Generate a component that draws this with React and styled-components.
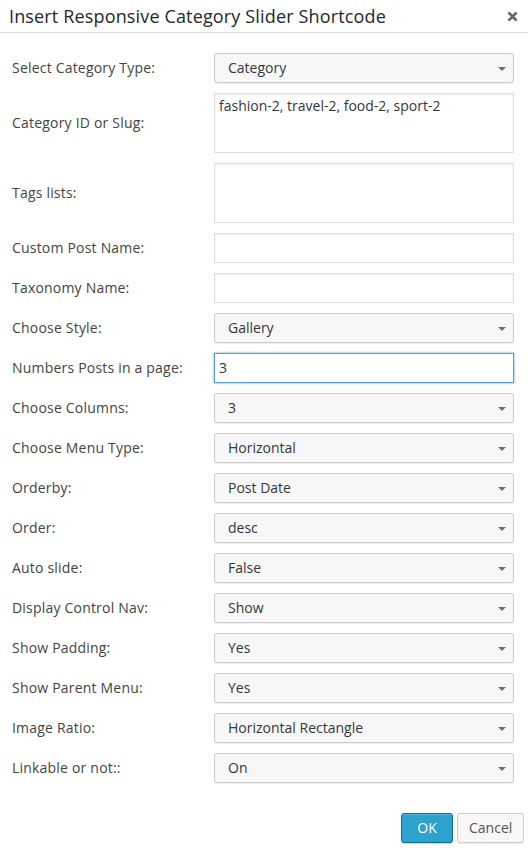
import React, { useEffect, useRef } from "react";
import styled, { createGlobalStyle } from "styled-components";

const Global = createGlobalStyle`
  html, body { margin: 0; padding: 0; background: #fff; }
  body { font-family: "Open Sans", "Liberation Sans", sans-serif; }
  * { box-sizing: border-box; }
`;

const Dialog = styled.div`
  width: 528px;
  height: 850px;
  background: #fff;
  display: flex;
  flex-direction: column;
`;

const Header = styled.div`
  height: 33px;
  border-bottom: 1px solid #dddddd;
  display: flex;
  align-items: center;
  justify-content: space-between;
  padding: 0 8px 0 9px;
`;

const Title = styled.h1`
  margin: 0;
  font-size: 18px;
  font-weight: 400;
  letter-spacing: 0.15px;
  color: #23282d;
  line-height: 30px;
`;

const Close = styled.button`
  border: 0;
  background: none;
  padding: 0;
  width: 16px;
  height: 16px;
  display: flex;
  align-items: center;
  justify-content: center;
  cursor: pointer;
`;

const Form = styled.div`
  padding: 20px 14px 0 12px;
  display: flex;
  flex-direction: column;
  gap: 10px;
`;

const Row = styled.div`
  display: grid;
  grid-template-columns: 202px 300px;
  align-items: center;
`;

const Label = styled.label`
  font-size: 14px;
  letter-spacing: 0.2px;
  color: #444;
  line-height: 20px;
`;

const SelectWrap = styled.div`
  position: relative;
  height: 30px;
`;

const Select = styled.select`
  appearance: none;
  -webkit-appearance: none;
  width: 100%;
  height: 30px;
  border: 1px solid #cccccc;
  border-radius: 3px;
  background: #f7f7f7;
  box-shadow: 0 1px 0 rgba(0, 0, 0, 0.06);
  font-family: "Open Sans", "Liberation Sans", sans-serif;
  font-size: 14px;
  color: #32373c;
  padding: 0 24px 2px 13px;
  outline: none;
`;

const Arrow = styled.svg`
  position: absolute;
  right: 8px;
  top: 14px;
  pointer-events: none;
`;

const TextArea = styled.textarea`
  width: 100%;
  height: 60px;
  border: 1px solid #dddddd;
  box-shadow: inset 0 1px 2px rgba(0, 0, 0, 0.07);
  font-family: "Open Sans", "Liberation Sans", sans-serif;
  font-size: 14px;
  color: #32373c;
  padding: 2px 4px;
  resize: none;
  display: block;
  outline: none;
  line-height: 20px;
`;

const Input = styled.input`
  width: 100%;
  height: 30px;
  border: 1px solid ${(p) => (p.$focus ? "#5b9dd9" : "#dddddd")};
  box-shadow: ${(p) =>
    p.$focus ? "0 0 2px rgba(30, 140, 190, 0.8)" : "inset 0 1px 2px rgba(0, 0, 0, 0.07)"};
  font-family: "Open Sans", "Liberation Sans", sans-serif;
  font-size: 14px;
  color: #32373c;
  padding: 0 4px 1px;
  outline: none;
  display: block;
  caret-color: #000;
`;

const Footer = styled.div`
  display: flex;
  justify-content: flex-end;
  gap: 4px;
  padding: 30px 4px 0 0;
`;

const Button = styled.button`
  height: 30px;
  padding: 0 11px 1px;
  border-radius: 3px;
  font-family: "Open Sans", "Liberation Sans", sans-serif;
  font-size: 14px;
  line-height: 28px;
  cursor: pointer;
  border: 1px solid ${(p) => (p.$primary ? "#0074a2" : "#cccccc")};
  background: ${(p) => (p.$primary ? "#2ea2cc" : "#f7f7f7")};
  color: ${(p) => (p.$primary ? "#fff" : "#555")};
  box-shadow: ${(p) =>
    p.$primary
      ? "inset 0 1px 0 rgba(120, 200, 230, 0.5), 0 1px 0 rgba(0, 0, 0, 0.15)"
      : "inset 0 1px 0 #fff, 0 1px 0 rgba(0, 0, 0, 0.08)"};
  width: ${(p) => (p.$primary ? "52px" : "67px")};
`;

const SelectField = ({ value }) => (
  <SelectWrap>
    <Select defaultValue={value}>
      <option>{value}</option>
    </Select>
    <Arrow width="8" height="4" viewBox="0 0 8 4">
      <path d="M0 0 L8 0 L4 4 Z" fill="#6e6e6e" />
    </Arrow>
  </SelectWrap>
);

const FocusInput = ({ value }) => {
  const ref = useRef(null);
  useEffect(() => {
    const el = ref.current;
    if (el) {
      el.focus();
      el.setSelectionRange(value.length, value.length);
    }
  }, [value]);
  return <Input ref={ref} $focus defaultValue={value} />;
};

const rows = [
  ["Select Category Type:", "select", "Category"],
  ["Category ID or Slug:", "textarea", "fashion-2, travel-2, food-2, sport-2"],
  ["Tags lists:", "textarea", ""],
  ["Custom Post Name:", "input", ""],
  ["Taxonomy Name:", "input", ""],
  ["Choose Style:", "select", "Gallery"],
  ["Numbers Posts in a page:", "focus", "3"],
  ["Choose Columns:", "select", "3"],
  ["Choose Menu Type:", "select", "Horizontal"],
  ["Orderby:", "select", "Post Date"],
  ["Order:", "select", "desc"],
  ["Auto slide:", "select", "False"],
  ["Display Control Nav:", "select", "Show"],
  ["Show Padding:", "select", "Yes"],
  ["Show Parent Menu:", "select", "Yes"],
  ["Image Ratio:", "select", "Horizontal Rectangle"],
  ["Linkable or not::", "select", "On"],
];

export default function App() {
  return (
    <Dialog>
      <Global />
      <Header>
        <Title>Insert Responsive Category Slider Shortcode</Title>
        <Close aria-label="Close">
          <svg width="11" height="11" viewBox="0 0 11 11">
            <path d="M1.5 1.5 L9.5 9.5 M9.5 1.5 L1.5 9.5" stroke="#666" strokeWidth="2.6" strokeLinecap="butt" />
          </svg>
        </Close>
      </Header>
      <Form>
        {rows.map(([label, type, value]) => (
          <Row key={label}>
            <Label>{label}</Label>
            {type === "select" && <SelectField value={value} />}
            {type === "textarea" && <TextArea defaultValue={value} />}
            {type === "input" && <Input defaultValue={value} />}
            {type === "focus" && <FocusInput value={value} />}
          </Row>
        ))}
      </Form>
      <Footer>
        <Button $primary>OK</Button>
        <Button>Cancel</Button>
      </Footer>
    </Dialog>
  );
}
